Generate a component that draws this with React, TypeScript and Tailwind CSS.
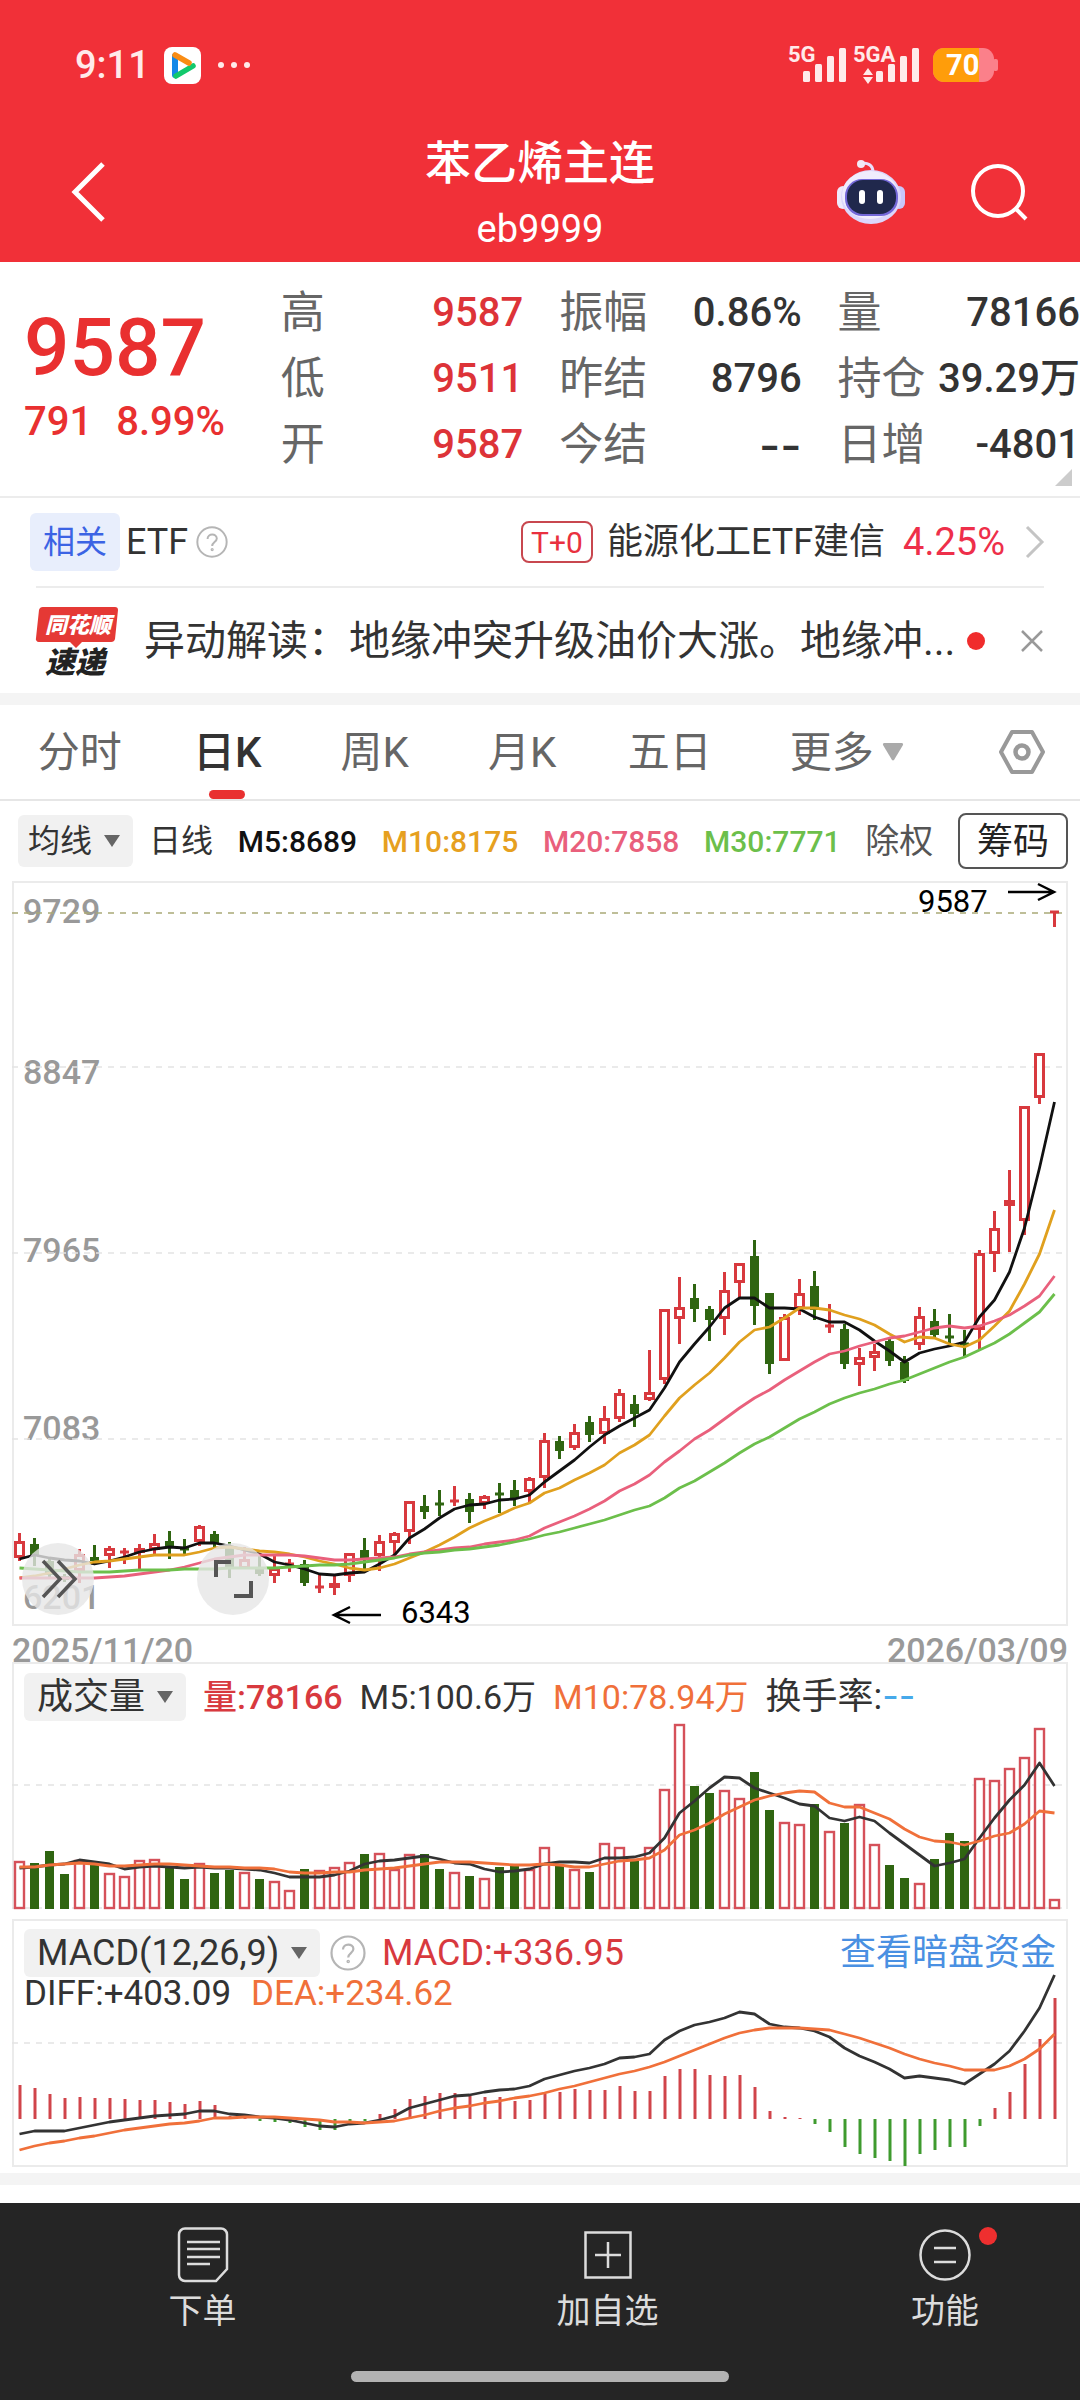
import { useState, type ReactNode } from 'react'
import clsx from 'clsx'

// y positions inside the price panel: [high, body top, body bottom, low, rising]
const candles: [number, number, number, number, 0 | 1][] = [
    [652, 660, 677, 680, 1], [657, 663, 674, 685, 0], [678, 680, 694, 697, 0], [693, 695, 699, 701, 0], [668, 673, 690, 702, 1],
    [664, 676, 680, 684, 0], [665, 667, 675, 687, 1], [667, 670, 672, 683, 1], [663, 667, 672, 688, 1], [653, 662, 669, 673, 1],
    [650, 660, 666, 678, 0], [658, 667, 670, 673, 0], [644, 645, 661, 665, 1], [650, 653, 662, 668, 0], [661, 665, 687, 697, 0],
    [666, 678, 688, 688, 1], [675, 687, 693, 695, 0], [675, 687, 695, 702, 1], [678, 682, 683, 691, 1], [679, 683, 702, 705, 0],
    [693, 705, 707, 712, 1], [695, 702, 707, 714, 1], [672, 672, 695, 701, 1], [657, 669, 677, 688, 0], [654, 660, 675, 690, 1],
    [651, 652, 662, 673, 1], [620, 620, 651, 663, 1], [614, 625, 631, 638, 0], [609, 622, 623, 635, 0], [605, 619, 621, 625, 1],
    [612, 618, 631, 642, 0], [614, 615, 623, 628, 1], [602, 612, 613, 632, 0], [599, 609, 618, 625, 0], [596, 597, 611, 622, 1],
    [552, 559, 597, 607, 1], [555, 560, 570, 578, 0], [543, 551, 567, 569, 1], [535, 541, 554, 561, 0], [525, 537, 553, 563, 1],
    [508, 512, 538, 541, 1], [514, 523, 533, 546, 0], [469, 511, 519, 520, 1], [428, 428, 499, 503, 1], [396, 426, 438, 463, 1],
    [403, 417, 428, 441, 0], [425, 428, 439, 460, 0], [391, 409, 438, 454, 1], [382, 382, 402, 418, 1], [359, 375, 425, 444, 0],
    [412, 412, 483, 493, 0], [433, 436, 480, 480, 1], [398, 412, 428, 434, 1], [390, 405, 429, 439, 0], [423, 444, 446, 452, 1],
    [443, 448, 483, 488, 0], [467, 476, 484, 505, 1], [463, 470, 477, 490, 1], [458, 460, 480, 485, 0], [475, 481, 500, 502, 0],
    [426, 435, 464, 469, 1], [428, 440, 454, 457, 0], [433, 455, 456, 463, 0], [449, 462, 463, 475, 0], [369, 372, 449, 468, 1],
    [330, 347, 373, 391, 1], [289, 319, 325, 371, 1], [225, 225, 340, 354, 1], [172, 172, 217, 223, 1], [30, 30, 32, 46, 1],
]

const ma5 = [678, 674, 677, 679, 680, 683, 680, 676, 671, 668, 666, 667, 662, 662, 665, 669, 673, 681, 684, 688, 693, 694, 692, 691, 683, 674, 657, 648, 637, 628, 624, 623, 619, 618, 614, 601, 590, 579, 566, 554, 545, 537, 529, 507, 481, 463, 446, 427, 417, 417, 427, 427, 428, 436, 441, 441, 449, 460, 470, 481, 472, 468, 465, 461, 436, 419, 391, 347, 287, 221]
const ma10 = [697, 695, 692, 688, 684, 681, 680, 678, 676, 674, 674, 674, 671, 667, 666, 668, 670, 671, 673, 676, 680, 683, 687, 689, 687, 683, 677, 671, 664, 656, 647, 640, 634, 627, 622, 612, 607, 599, 592, 584, 572, 564, 554, 535, 517, 504, 492, 477, 461, 449, 446, 437, 427, 427, 429, 434, 438, 444, 453, 461, 456, 457, 463, 466, 459, 445, 430, 403, 373, 329]
const ma20 = [697, 697, 697, 697, 697, 697, 696, 695, 693, 691, 689, 686, 682, 678, 676, 674, 674, 674, 674, 675, 677, 679, 679, 678, 677, 676, 673, 671, 669, 667, 666, 663, 661, 659, 655, 647, 641, 635, 628, 620, 610, 603, 594, 581, 570, 558, 549, 538, 527, 517, 509, 499, 490, 481, 473, 470, 465, 461, 457, 455, 451, 447, 445, 447, 445, 440, 434, 425, 415, 395]
const ma30 = [687, 688, 689, 690, 691, 691, 691, 690, 689, 689, 689, 688, 688, 688, 687, 687, 687, 687, 686, 685, 684, 684, 683, 681, 679, 677, 674, 672, 671, 669, 668, 666, 664, 661, 658, 654, 651, 647, 643, 639, 634, 629, 625, 617, 607, 600, 591, 582, 572, 563, 556, 547, 538, 531, 523, 517, 512, 508, 503, 499, 493, 487, 481, 476, 469, 462, 453, 442, 431, 413]

const volumes = [200, 202, 190, 213, 199, 204, 212, 215, 199, 198, 206, 218, 202, 212, 209, 211, 218, 220, 229, 208, 209, 206, 201, 193, 192, 208, 193, 193, 208, 211, 215, 217, 206, 205, 208, 186, 205, 208, 211, 182, 186, 200, 186, 128, 63, 125, 132, 129, 137, 111, 149, 161, 163, 143, 170, 162, 143, 183, 204, 217, 222, 198, 172, 180, 117, 119, 107, 96, 67, 238]
const volMa5 = [207, 206, 204, 203, 199, 201, 203, 208, 206, 205, 206, 207, 206, 207, 207, 208, 209, 212, 216, 216, 216, 214, 210, 203, 200, 199, 197, 195, 198, 202, 203, 208, 211, 210, 208, 203, 201, 201, 202, 197, 197, 196, 192, 177, 152, 140, 127, 116, 117, 127, 132, 137, 143, 145, 157, 160, 156, 160, 172, 183, 194, 205, 202, 198, 177, 157, 139, 124, 102, 125]
const volMa10 = [206, 206, 204, 203, 202, 203, 205, 205, 204, 203, 203, 204, 205, 206, 206, 207, 207, 208, 211, 212, 212, 211, 211, 209, 208, 207, 205, 203, 201, 201, 201, 202, 203, 204, 204, 203, 204, 206, 206, 203, 200, 199, 197, 189, 174, 169, 162, 153, 146, 139, 135, 132, 130, 131, 142, 146, 146, 152, 158, 168, 176, 180, 181, 184, 180, 175, 172, 163, 150, 152]

const macd = [166, 169, 175, 179, 178, 179, 179, 180, 181, 181, 183, 185, 182, 186, 197, 198, 202, 203, 204, 208, 211, 211, 202, 202, 195, 190, 180, 177, 174, 174, 177, 178, 178, 182, 181, 175, 173, 170, 171, 171, 167, 172, 172, 157, 150, 150, 156, 157, 156, 168, 192, 198, 199, 205, 213, 228, 235, 239, 242, 247, 235, 231, 228, 228, 207, 189, 173, 145, 120, 79]
const diff = [215, 212, 212, 212, 209, 206, 203, 201, 199, 197, 196, 195, 192, 192, 195, 196, 198, 199, 201, 204, 207, 208, 205, 204, 201, 197, 189, 185, 181, 177, 176, 173, 171, 170, 167, 160, 156, 152, 149, 145, 139, 138, 135, 121, 112, 106, 103, 99, 93, 95, 105, 108, 109, 112, 118, 129, 137, 143, 150, 159, 157, 159, 161, 165, 155, 145, 132, 112, 89, 56]
const dea = [231, 227, 224, 222, 219, 217, 214, 211, 209, 207, 205, 204, 202, 199, 199, 198, 198, 198, 199, 200, 201, 203, 203, 204, 203, 202, 199, 196, 192, 189, 187, 184, 182, 179, 177, 174, 170, 167, 163, 159, 155, 152, 148, 143, 137, 131, 125, 119, 114, 111, 109, 109, 109, 110, 111, 115, 119, 124, 129, 135, 140, 144, 147, 151, 151, 151, 147, 140, 130, 115]

const quoteColumns = [
    [
        { label: '高', value: '9587', up: true },
        { label: '低', value: '9511', up: true },
        { label: '开', value: '9587', up: true },
    ],
    [
        { label: '振幅', value: '0.86%' },
        { label: '昨结', value: '8796' },
        { label: '今结', value: '--' },
    ],
    [
        { label: '量', value: '78166' },
        { label: '持仓', value: '39.29万' },
        { label: '日增', value: '-4801' },
    ],
]

const tabs = ['分时', '日K', '周K', '月K', '五日']

const x = (i: number) => 19.5 + i * 15

function Line({ data, color }: { data: number[]; color: string }) {
    return (
        <polyline
            points={data.map((y, i) => `${x(i)},${y}`).join(' ')}
            fill="none"
            stroke={color}
            strokeWidth="2.8"
            strokeLinejoin="round"
        />
    )
}

function Grid({ y, color = '#e4e4e4' }: { y: number; color?: string }) {
    return <line x1="12" x2="1066" y1={y} y2={y} stroke={color} strokeWidth="1.6" strokeDasharray="6 6" />
}

function Dropdown({ label, options, className }: { label: string; options: string[]; className?: string }) {
    return (
        <div className={clsx('grid items-center rounded-md bg-[#f1f1f1] text-[#333]', className)}>
            <select aria-label={label} className="col-start-1 row-start-1 appearance-none bg-transparent pr-10 outline-none">
                {options.map((option) => (
                    <option key={option}>{option}</option>
                ))}
            </select>
            <svg viewBox="0 0 18 12" className="pointer-events-none col-start-1 row-start-1 mr-3 w-[18px] justify-self-end">
                <path d="M1 0h16L9 12z" fill="#666" />
            </svg>
        </div>
    )
}

function HelpIcon({ className }: { className?: string }) {
    return (
        <svg viewBox="0 0 36 36" fill="none" stroke="#b5b5b5" strokeWidth="2.2" className={className}>
            <circle cx="18" cy="18" r="16.5" />
            <path d="M13 14.5c0-6.5 10.400-6.500 10.400-.5 0 4-5.200 4.200-5.200 8.500" />
            <circle cx="18.200" cy="26.500" r="0.700" />
        </svg>
    )
}

function SignalBars() {
    return (
        <>
            <rect x="0" y="23" width="7" height="11" rx="1.500" />
            <rect x="12" y="16" width="7" height="18" rx="1.500" />
            <rect x="24" y="8" width="7" height="26" rx="1.500" />
            <rect x="36" y="0" width="7" height="34" rx="1.500" />
        </>
    )
}

function StatusBar() {
    return (
        <div className="flex h-[130px] items-center pl-[75px] pr-[80px] text-[#ffeaea]">
            <span className="text-[38px] font-medium">9:11</span>
            <svg viewBox="0 0 37 37" className="ml-[14px] w-[37px]">
                <rect width="37" height="37" rx="8" fill="#fff" />
                <path d="M11 9v19" stroke="#1488e8" strokeWidth="6" strokeLinecap="round" />
                <path d="M12 29l17-10" stroke="#12c96c" strokeWidth="5.500" strokeLinecap="round" />
                <path d="M11 8l14 8" stroke="#f98c14" strokeWidth="5.500" strokeLinecap="round" />
            </svg>
            <svg viewBox="0 0 32 6" fill="currentColor" className="ml-[17px] w-8">
                <circle cx="3" cy="3" r="3" />
                <circle cx="16" cy="3" r="3" />
                <circle cx="29" cy="3" r="3" />
            </svg>
            <svg viewBox="0 0 212 42" fill="currentColor" className="ml-auto w-[212px]">
                <text x="0" y="18" fontSize="22" fontWeight="700">5G</text>
                <g transform="translate(15 4)"><SignalBars /></g>
                <text x="65" y="18" fontSize="22" fontWeight="700">5GA</text>
                <g transform="translate(88 4)"><SignalBars /></g>
                <path d="M75 31l5-7 5 7zM75 33h10l-5 7z" />
                <rect x="145" y="4" width="61" height="34" rx="11" fill="#fb808a" />
                <rect x="205" y="15" width="5" height="12" rx="2" fill="#fb808a" />
                <path d="M156 4h35v34h-35a11 11 0 0 1-11-11V15a11 11 0 0 1 11-11z" fill="#ff9d0a" />
                <text x="158" y="31" fontSize="29" fontWeight="700" fill="#fff">70</text>
            </svg>
        </div>
    )
}

function Header() {
    return (
        <header className="bg-[#f13038] text-white">
            <StatusBar />
            <div className="grid h-[132px] grid-cols-[1fr_auto_1fr] items-center">
                <div className="flex pb-2 pl-[70px]">
                    <button aria-label="返回">
                        <svg viewBox="0 0 36 62" fill="none" stroke="currentColor" strokeWidth="5" className="w-9">
                            <path d="M33 3L5 31l28 28" />
                        </svg>
                    </button>
                </div>
                <div className="text-center">
                    <h1 className="text-[46px] font-medium leading-[66px]">苯乙烯主连</h1>
                    <p className="text-[38px] leading-[66px]">eb9999</p>
                </div>
                <div className="flex items-center justify-end gap-[64px] pb-2 pr-[52px]">
                    <button aria-label="智能助手">
                        <svg viewBox="0 0 70 66" className="w-[70px]">
                            <path d="M25 5c6-2 12 1 12 8" fill="none" stroke="#e9dffc" strokeWidth="3" />
                            <circle cx="25" cy="5" r="4" fill="#f2e9f5" />
                            <rect x="1" y="27" width="12" height="23" rx="6" fill="#efe9fb" />
                            <rect x="57" y="27" width="12" height="23" rx="6" fill="#c9c6fa" />
                            <ellipse cx="35" cy="38" rx="30" ry="27" fill="#dcd6fb" />
                            <ellipse cx="34" cy="36" rx="28" ry="24" fill="#f0ecfd" />
                            <rect x="9" y="20" width="53" height="37" rx="17" fill="#7468d8" />
                            <rect x="11" y="21" width="49" height="34" rx="16" fill="#20284c" />
                            <rect x="23" y="31" width="6" height="14" rx="3" fill="#fff" />
                            <rect x="41" y="31" width="6" height="14" rx="3" fill="#fff" />
                        </svg>
                    </button>
                    <button aria-label="搜索">
                        <svg viewBox="0 0 58 60" fill="none" stroke="currentColor" strokeWidth="4" className="w-[58px]">
                            <circle cx="28" cy="29" r="25" />
                            <path d="M45 46l11 11" />
                        </svg>
                    </button>
                </div>
            </div>
        </header>
    )
}

function Quote() {
    return (
        <section className="flex border-b-2 border-[#ececec] pb-[18px] pt-[18px]">
            <div className="w-[26%] pl-6 pt-[28px] text-[#e93030]">
                <div className="text-[80px] font-medium leading-[80px]">9587</div>
                <div className="mt-[14px] flex gap-6 text-[40px] font-medium leading-[40px]">
                    <span>791</span>
                    <span>8.99%</span>
                </div>
            </div>
            <div className="relative flex flex-1 gap-9">
                {quoteColumns.map((column, i) => (
                    <dl key={i} className="flex-1">
                        {column.map((item) => (
                            <div key={item.label} className="flex h-[66px] items-center justify-between whitespace-nowrap">
                                <dt className="text-[44px] leading-[66px] text-[#666]">{item.label}</dt>
                                <dd
                                    className={clsx(
                                        'font-medium leading-[66px]',
                                        item.up ? 'text-[#dd3338]' : 'text-[#333]',
                                        item.value === '--' ? 'font-[Inter] text-[46px]' : 'text-[40px]'
                                    )}
                                >
                                    {item.value}
                                </dd>
                            </div>
                        ))}
                    </dl>
                ))}
                <svg viewBox="0 0 17 17" className="absolute -bottom-2 right-2 w-[17px]">
                    <path d="M17 0v17H0z" fill="#ccc" />
                </svg>
            </div>
        </section>
    )
}

function Related() {
    return (
        <div className="flex h-[88px] items-center pl-[30px] pr-[35px] text-[36px] text-[#333]">
            <span className="flex h-[58px] items-center rounded-md bg-[#e8eefc] px-[13px] text-[32px] text-[#3b63e4]">相关</span>
            <span className="ml-1.5">ETF</span>
            <button aria-label="说明" className="ml-2">
                <HelpIcon className="w-8" />
            </button>
            <a href="#etf" className="ml-auto flex items-center">
                <span className="flex h-[42px] items-center rounded-lg border-2 border-[#c8474f] px-2 text-[30px] text-[#e9303f]">T+0</span>
                <span className="ml-[14px]">能源化工ETF建信</span>
                <span className="ml-[18px] text-[38px] text-[#ee2f4a]">4.25%</span>
                <svg viewBox="0 0 20 34" fill="none" stroke="#c4c4c4" strokeWidth="3" className="ml-[20px] w-5">
                    <path d="M2 2l15 15L2 32" />
                </svg>
            </a>
        </div>
    )
}

function News() {
    return (
        <div className="mx-[36px] flex h-[107px] items-center border-t-2 border-[#ececec]">
            <svg viewBox="0 0 82 70" className="w-[82px] shrink-0 overflow-visible italic">
                <path d="M7 1h72a3 3 0 0 1 3 3l-3 29a4 4 0 0 1-4 3H46l-6 6-6-6H3a3 3 0 0 1-3-4L3 4a4 4 0 0 1 4-3z" fill="#e53935" />
                <text x="9" y="27" fontSize="22" fontWeight="900" fill="#fff">同花顺</text>
                <text x="9" y="67" fontSize="30" fontWeight="900" fill="#222">速递</text>
            </svg>
            <a href="#news" className="ml-[26px] min-w-0 truncate text-[41px] leading-[60px] text-[#333]">
                异动解读：地缘冲突升级油价大涨。地缘冲...
            </a>
            <span className="ml-3 size-[18px] shrink-0 rounded-full bg-[#f02c2c]" />
            <button aria-label="关闭" className="ml-auto">
                <svg viewBox="0 0 24 24" fill="none" stroke="#999" strokeWidth="2.500" className="w-6">
                    <path d="M2 2l20 20M22 2L2 22" />
                </svg>
            </button>
        </div>
    )
}

function PeriodTabs() {
    const [active, setActive] = useState('日K')

    return (
        <nav className="flex h-[96px] border-b-2 border-[#e6e6e6] pl-1.5 text-[42px] text-[#666]">
            {tabs.map((tab) => (
                <button key={tab} onClick={() => setActive(tab)} className="flex flex-1 flex-col items-center justify-between pt-[18px]">
                    <span className={clsx('leading-[60px]', tab === active && 'font-medium text-[#333]')}>{tab}</span>
                    {tab === active && <span className="h-[9px] w-[36px] rounded-full bg-[#e93030]" />}
                </button>
            ))}
            <button className="flex flex-[1.4] items-center justify-center gap-2">
                更多
                <svg viewBox="0 0 22 18" className="w-[22px]">
                    <path d="M2 0h18a1.500 1.500 0 0 1 1 2l-9 15a1.500 1.500 0 0 1-2 0L1 2a1.500 1.500 0 0 1 1-2z" fill="#aaa" />
                </svg>
            </button>
            <button aria-label="设置" className="flex w-[130px] items-center justify-end pr-[35px]">
                <svg viewBox="0 0 46 46" fill="none" stroke="#999" className="w-[46px]">
                    <path d="M13 3h20L44 23 33 43H13L2 23z" strokeWidth="4" strokeLinejoin="round" />
                    <circle cx="23" cy="23" r="6.500" strokeWidth="4.500" />
                </svg>
            </button>
        </nav>
    )
}

function AverageLegend() {
    return (
        <div className="flex h-20 items-center justify-between whitespace-nowrap pl-[18px] pr-[12px] text-[30px] font-medium">
            <div className="flex items-center gap-4 text-[32px] font-normal text-[#333]">
                <Dropdown label="均线" options={['均线']} className="h-[52px] [&>select]:pl-[10px]" />
                <span>日线</span>
            </div>
            <span className="text-[#111]">M5:8689</span>
            <span className="text-[#e6a020]">M10:8175</span>
            <span className="text-[#e9607c]">M20:7858</span>
            <span className="text-[#6cbf4b]">M30:7771</span>
            <span className="text-[34px] font-normal text-[#555]">除权</span>
            <button className="h-[56px] rounded-lg border-2 border-[#555] px-[17px] text-[36px] font-normal text-[#222]">筹码</button>
        </div>
    )
}

function PriceChart() {
    return (
        <div className="relative">
            <svg viewBox="0 0 1080 781" className="block w-full overflow-visible">
                <rect x="13" y="1" width="1054" height="743" fill="none" stroke="#ebebeb" strokeWidth="2" />
                <g fill="#999" fontSize="34" fontWeight="500">
                    <text x="23" y="42">9729</text>
                    <text x="23" y="203">8847</text>
                    <text x="23" y="381">7965</text>
                    <text x="23" y="559">7083</text>
                    <text x="23" y="728">6201</text>
                    <text x="12" y="781">2025/11/20</text>
                    <text x="1068" y="781" textAnchor="end">2026/03/09</text>
                </g>
                <Grid y={32} color="#a9a977" />
                <Grid y={186} />
                <Grid y={372} />
                <Grid y={558} />
                {candles.map(([high, top, bottom, low, rising], i) => {
                    const color = rising ? '#d8393e' : '#2f6511'
                    const half = rising ? 4 : 3
                    return (
                        <g key={i} stroke={color} strokeWidth="3" fill={rising && bottom - top > 6 ? '#fff' : color}>
                            <path d={`M${x(i)} ${high}V${low}`} />
                            {bottom - top < 4 ? (
                                <path d={`M${x(i) - 4.500} ${top + 1}h9`} />
                            ) : (
                                <rect x={x(i) - half} y={top + 1.500} width={half * 2} height={Math.max(bottom - top - 3, 1)} />
                            )}
                        </g>
                    )
                })}
                <Line data={ma5} color="#111" />
                <Line data={ma10} color="#e0a01e" />
                <Line data={ma20} color="#e9607c" />
                <Line data={ma30} color="#6cbf4b" />
                <g fill="none" stroke="#000" strokeWidth="2.500">
                    <path d="M1008 11h46M1038 3l16 8-16 8" />
                    <path d="M381 734h-46M350 726l-16 8 16 8" />
                </g>
                <text x="918" y="31" fontSize="31">9587</text>
                <text x="401" y="742" fontSize="31">6343</text>
            </svg>
            <button aria-label="展开" className="absolute bottom-[47px] left-[22px] size-[72px] rounded-full bg-[#e6e6e6]/80">
                <svg viewBox="0 0 72 72" fill="none" stroke="#555" strokeWidth="3.500">
                    <path d="M21 18l17 18-17 18M36 18l17 18-17 18" />
                </svg>
            </button>
            <button aria-label="全屏" className="absolute bottom-[47px] left-[197px] size-[72px] rounded-full bg-[#e6e6e6]/80">
                <svg viewBox="0 0 72 72" fill="none" stroke="#555" strokeWidth="4">
                    <path d="M19 34V19h15M54 38v15H37" />
                </svg>
            </button>
        </div>
    )
}

function Panel({ chart, children }: { chart: ReactNode; children: ReactNode }) {
    return (
        <div className="grid">
            <div className="col-start-1 row-start-1">{chart}</div>
            <div className="z-10 col-start-1 row-start-1 whitespace-nowrap px-6 pt-[10px]">{children}</div>
        </div>
    )
}

function VolumePanel() {
    return (
        <Panel
            chart={
                <svg viewBox="0 1 1080 257" className="block w-full">
                    <path d="M13 248V2h1054v246" fill="none" stroke="#ebebeb" strokeWidth="2" />
                    <Grid y={124} />
                    <Grid y={247} />
                    {volumes.map((top, i) =>
                        candles[i][4] ? (
                            <rect key={i} x={x(i) - 4.500} y={top + 1} width="9" height={246 - top} fill="#fff" stroke="#d5515a" strokeWidth="2.400" />
                        ) : (
                            <rect key={i} x={x(i) - 4.500} y={top} width="9" height={248 - top} fill="#2f6511" />
                        )
                    )}
                    <Line data={volMa5} color="#333" />
                    <Line data={volMa10} color="#f0703a" />
                </svg>
            }
        >
            <div className="flex items-center gap-[17px] text-[34px] leading-[48px]">
                <Dropdown label="副图指标" options={['成交量']} className="h-12 text-[36px] [&>select]:pl-[13px]" />
                <span className="font-medium text-[#d8393e]">量:78166</span>
                <span className="text-[#333]">M5:100.6万</span>
                <span className="text-[#f0703a]">M10:78.94万</span>
                <span className="text-[36px] text-[#333]">
                    换手率:<span className="font-[Inter] text-[#46a9ea]">--</span>
                </span>
            </div>
        </Panel>
    )
}

function MacdPanel() {
    return (
        <Panel
            chart={
                <svg viewBox="0 0 1080 248" className="block w-full">
                    <rect x="13" y="1" width="1054" height="246" fill="none" stroke="#ebebeb" strokeWidth="2" />
                    <Grid y={124} />
                    {macd.map((y, i) => (
                        <path key={i} d={`M${x(i) + 0.500} 200V${y}`} stroke={y > 200 ? '#3f9b2f' : '#d0444a'} strokeWidth="3" />
                    ))}
                    <Line data={diff} color="#333" />
                    <Line data={dea} color="#f0703a" />
                </svg>
            }
        >
            <div className="flex items-center text-[36px] leading-[48px]">
                <Dropdown label="指标参数" options={['MACD(12,26,9)']} className="h-12 [&>select]:pl-[13px]" />
                <button aria-label="指标说明" className="ml-2.5">
                    <HelpIcon className="w-9" />
                </button>
                <span className="ml-4 text-[#d8393e]">MACD:+336.95</span>
                <a href="#funds" className="ml-auto text-[#4a90e2]">查看暗盘资金</a>
            </div>
            <div className="flex gap-5 text-[35px] leading-[34px]">
                <span className="text-[#333]">DIFF:+403.09</span>
                <span className="text-[#f0703a]">DEA:+234.62</span>
            </div>
        </Panel>
    )
}

function BottomBar() {
    return (
        <footer className="bg-[#252525] pb-[18px] pt-6 text-[34px] text-[#dcdcdc]">
            <div className="flex">
                <button className="flex flex-[3] flex-col items-center gap-2 leading-[40px]">
                    <svg viewBox="0 0 56 56" fill="none" stroke="currentColor" strokeWidth="2.500" className="w-14">
                        <path d="M10 1.500h36a6 6 0 0 1 6 6V42L41 54H10a6 6 0 0 1-6-6V7.500a6 6 0 0 1 6-6z" />
                        <path d="M12 15h33M12 22h33M12 30h33M12 37h23" />
                    </svg>
                    下单
                </button>
                <button className="flex flex-[3] flex-col items-center gap-2 leading-[40px]">
                    <svg viewBox="0 0 56 56" fill="none" stroke="currentColor" strokeWidth="2.500" className="w-14">
                        <path d="M5.500 5.500h45v45h-45zM28 15v26M15 28h26" />
                    </svg>
                    加自选
                </button>
                <button className="flex flex-[2] flex-col items-center gap-2 leading-[40px]">
                    <span className="relative">
                        <svg viewBox="0 0 56 56" fill="none" stroke="currentColor" strokeWidth="2.500" className="w-14">
                            <circle cx="28" cy="28" r="24.500" />
                            <path d="M17 21h22M17 35h22" />
                        </svg>
                        <span className="absolute -right-6 top-0 size-[18px] rounded-full bg-[#ef2f2f]" />
                    </span>
                    功能
                </button>
            </div>
            <div className="mx-auto mt-[40px] h-[11px] w-[35%] rounded-full bg-[#b3b3b3]" />
        </footer>
    )
}

export default function App() {
    return (
        <div className="min-h-screen bg-white font-[Roboto,'Noto_Sans_CJK_SC',sans-serif]">
            <Header />
            <main>
                <Quote />
                <Related />
                <News />
                <div className="h-3 bg-[#f4f4f4]" />
                <PeriodTabs />
                <AverageLegend />
                <PriceChart />
                <VolumePanel />
                <MacdPanel />
                <div className="mb-[18px] mt-[6px] h-3 bg-[#f4f4f4]" />
            </main>
            <BottomBar />
        </div>
    )
}
